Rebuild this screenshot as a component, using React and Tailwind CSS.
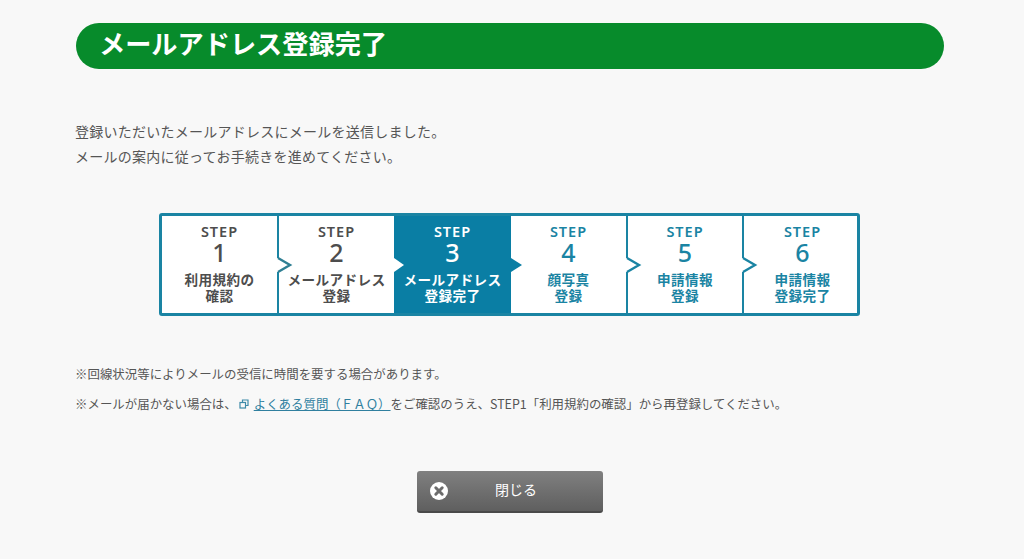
const steps = [
  { no: 1, lines: ['利用規約の', '確認'], w: 'w-[115px]', tone: 'done' },
  { no: 2, lines: ['メールアドレス', '登録'], w: 'w-[117px]', tone: 'done', notch: 'gray' },
  { no: 3, lines: ['メールアドレス', '登録完了'], w: 'w-[117px]', tone: 'current', notch: 'white' },
  { no: 4, lines: ['顔写真', '登録'], w: 'w-[115px]', tone: 'todo', notch: 'blue' },
  { no: 5, lines: ['申請情報', '登録'], w: 'w-[116px]', tone: 'todo', notch: 'line' },
  { no: 6, lines: ['申請情報', '登録完了'], w: 'flex-1 pl-[4px]', tone: 'todo', notch: 'line' },
];

function Notch({ kind }) {
  if (kind === 'white') {
    return (
      <svg className="absolute left-0 top-[42px]" width="12" height="14" viewBox="0 0 12 14">
        <path d="M0 0 L10 7 L0 14 Z" fill="#ffffff" />
      </svg>
    );
  }
  if (kind === 'blue') {
    return (
      <svg className="absolute left-0 top-[42px]" width="12" height="14" viewBox="0 0 12 14">
        <path d="M0 0 L11 7 L0 14 Z" fill="#0a7ea4" />
      </svg>
    );
  }
  const stroke = kind === 'gray' ? '#2f7f93' : '#1a84a3';
  return (
    <svg className="absolute left-[-2px] top-[37px]" width="16" height="24" viewBox="0 0 16 24">
      <path d="M0 5 L2 5 L11 12 L2 19 L0 19 Z" fill="#ffffff" />
      <path d="M1 5 L13 12 L1 19" fill="none" stroke={stroke} strokeWidth="2.4" />
    </svg>
  );
}

function Step({ step }) {
  const box =
    step.tone === 'current'
      ? 'bg-[#0a7ea4] text-white'
      : step.tone === 'todo'
        ? 'bg-white text-[#1a84a3]'
        : 'bg-white text-[#4d4d4d]';
  const divider = step.no > 1 && step.tone !== 'current' && step.notch !== 'blue' ? 'border-l-2 border-[#1a84a3]' : '';
  return (
    <div className={`relative ${step.w} ${box} ${divider} flex flex-col items-center pt-[7px]`}>
      {step.notch && <Notch kind={step.notch} />}
      <div className="text-[14.5px] leading-[17px] font-semibold tracking-[1px] font-['Noto_Sans',sans-serif]">STEP</div>
      <div className="text-[25px] leading-[25px] font-medium font-['Noto_Sans',sans-serif]">{step.no}</div>
      <div className="mt-[7px] text-center text-[13.6px] leading-[15.5px] font-semibold tracking-[0.4px]">
        {step.lines.map((l) => (
          <div key={l}>{l}</div>
        ))}
      </div>
    </div>
  );
}

export default function App() {
  return (
    <div className="h-[559px] overflow-hidden bg-[#f8f8f8] text-[#555555] font-['Noto_Sans_CJK_JP',sans-serif]">
      <div className="w-[868px] ml-[76px] pt-[23px]">
        <h1 className="h-[46px] rounded-[23px] bg-[#078b2b] pl-[23px] text-[26.2px] leading-[41px] font-bold text-white">
          メールアドレス登録完了
        </h1>

        <div className="mt-[50px] -ml-px text-[14px] leading-[25px] tracking-[0.25px]">
          <p>登録いただいたメールアドレスにメールを送信しました。</p>
          <p>メールの案内に従ってお手続きを進めてください。</p>
        </div>

        <div className="mt-[44px] ml-[83px] flex h-[103px] w-[701px] overflow-hidden rounded-[3px] border-[3px] border-[#1a84a3]">
          {steps.map((s) => (
            <Step key={s.no} step={s} />
          ))}
        </div>

        <div className="mt-[49px] -ml-px text-[12.45px] leading-[18px]">
          <p>※回線状況等によりメールの受信に時間を要する場合があります。</p>
          <p className="mt-[12px] flex items-center">
            ※メールが届かない場合は、
            <svg className="mr-[5px] ml-[2px]" width="10" height="10" viewBox="0 0 10 10" fill="none" stroke="#3d8aa8" strokeWidth="1.2">
              <rect x="1" y="3.5" width="5.5" height="5.5" />
              <path d="M3.5 3 V1 H9 V6.5 H7" />
            </svg>
            <a href="#" className="text-[#2f7f9f] underline">よくある質問（ＦＡＱ）</a>
            をご確認のうえ、STEP1「利用規約の確認」から再登録してください。
          </p>
        </div>

        <div className="mt-[58px] flex justify-center">
          <button className="relative flex h-[42px] w-[186px] items-center justify-center rounded-[3px] border-b-2 border-[#4a4a4a] bg-gradient-to-b from-[#808080] to-[#5f5f5f] pb-[3px] pl-[12px] text-[14px] text-white">
            <svg className="absolute left-[13px] top-[11px]" width="18" height="18" viewBox="0 0 18 18">
              <circle cx="9" cy="9" r="9" fill="#ffffff" />
              <path d="M5.8 5.8 L12.2 12.2 M12.2 5.8 L5.8 12.2" stroke="#6c6c6c" strokeWidth="3" strokeLinecap="round" />
            </svg>
            閉じる
          </button>
        </div>
      </div>
    </div>
  );
}
